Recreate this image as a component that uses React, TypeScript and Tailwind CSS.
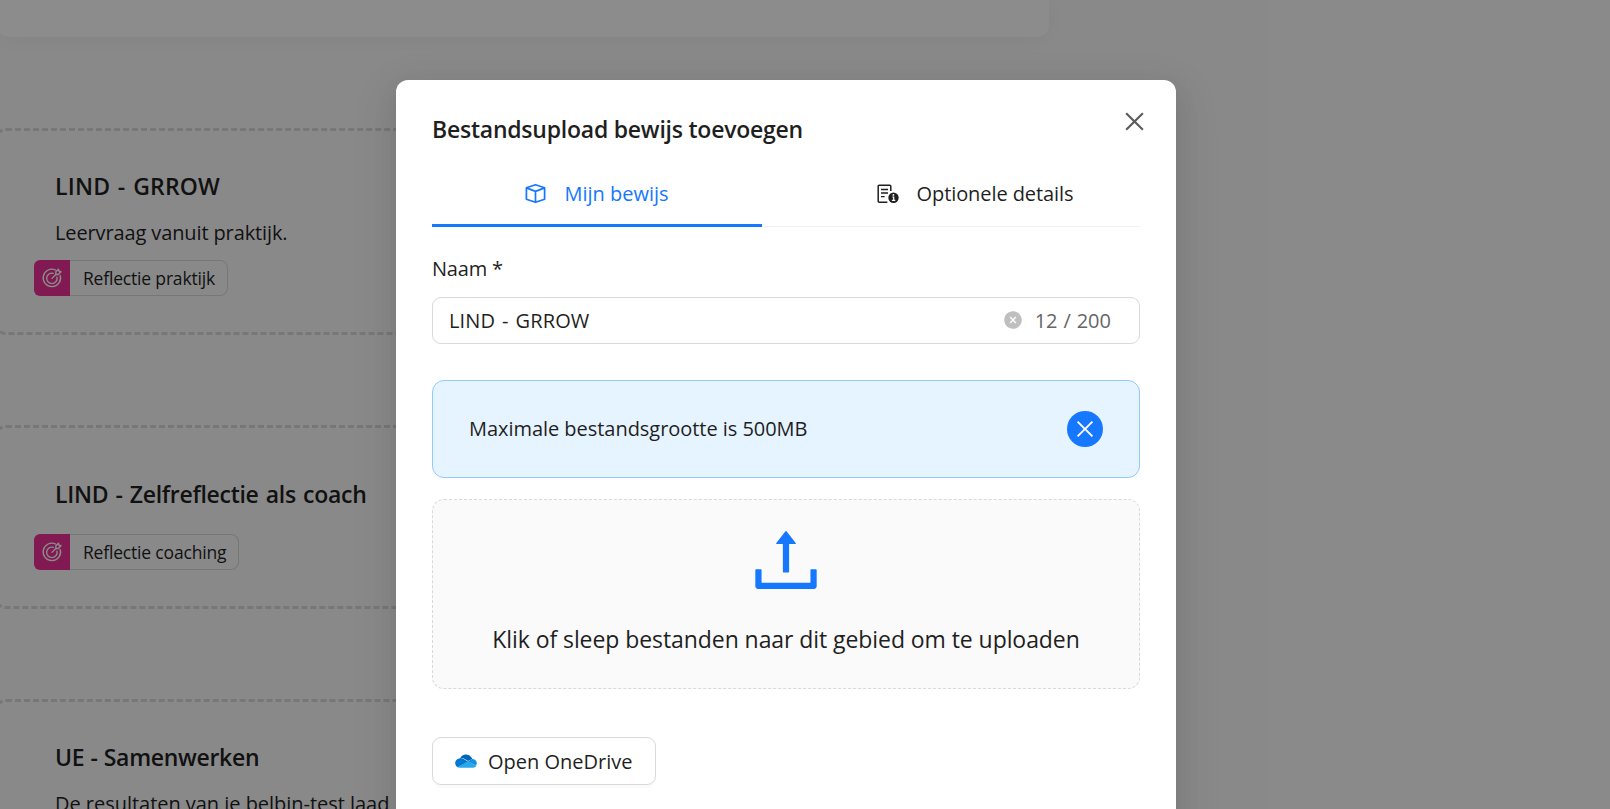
import type { ReactNode } from 'react';
import { AiOutlineClose, AiFillCloseCircle, AiOutlineUpload } from 'react-icons/ai';

function GoalIcon() {
  return (
    <svg
      viewBox="0 0 24 24"
      className="size-[22px]"
      fill="none"
      stroke="currentColor"
      strokeWidth="1.5"
      strokeLinecap="round"
      strokeLinejoin="round"
    >
      <path d="M15.6 3.200A9.500 9.500 0 1 0 21 9.400" />
      <path d="M13.400 6.900A5.700 5.700 0 1 0 17.400 11" />
      <path d="M12 12.400 16.400 8" />
      <path d="M16.200 8.200V5.200L19 2.400l.6 2.200 2.200.6L19 8.200z" />
    </svg>
  );
}

function CubeIcon() {
  return (
    <svg viewBox="0 0 21 21" className="size-[21px]" fill="none" stroke="currentColor" strokeWidth="1.7" strokeLinejoin="round">
      <path d="M10.5 1.700 19.600 4.700v11.600l-9.100 3-9.100-3V4.700z" />
      <path d="M1.400 4.900l9.100 3.500 9.100-3.500M10.500 8.400v10.900" />
    </svg>
  );
}

function DetailsIcon() {
  return (
    <svg viewBox="0 0 22 20" className="h-5 w-[22px]">
      <path
        d="M10.4 18.2H2.2a1 1 0 0 1-1-1V2.2a1 1 0 0 1 1-1h10.6a1 1 0 0 1 1 1V7"
        fill="none"
        stroke="currentColor"
        strokeWidth="1.5"
      />
      <path d="M4 5.5h7M4 9h7M4 12.6h3.6" stroke="currentColor" strokeWidth="1.4" fill="none" />
      <circle cx="16.5" cy="13.8" r="5.2" fill="currentColor" />
      <path d="M15.3 13h1.4v3.2M14.9 16.4h3.4" stroke="#fff" strokeWidth="1.2" fill="none" />
      <circle cx="16.4" cy="10.9" r=".9" fill="#fff" />
    </svg>
  );
}

function OneDriveIcon() {
  return (
    <svg viewBox="0 0 24 15" className="h-[14px] w-[22px]">
      <path d="M5.5 5A7 7 0 0 1 18 3.6L19 5.4l-4.700 2.200L9 4.600z" fill="#0364b8" />
      <path d="M5.5 4.6c1.300-.3 2.700 0 4 .7l5 3L3 14.300A5 5 0 0 1 .2 10C.1 7.200 2.500 4.700 5.500 4.600z" fill="#0078d4" />
      <path d="M14 8.2 16.900 6c1-.5 1.800-.8 2.600-.8 2.500.2 4.300 2.300 4.300 4.800l-.8 2.500z" fill="#1490df" />
      <path d="m14.3 7.9 9.100 4.800c-.8 1.400-2 2.100-3.700 2.100H5.200c-1 0-1.800-.2-2.700-.8z" fill="#28a8ea" />
    </svg>
  );
}

function EvidenceCard({ className, children }: { className: string; children: ReactNode }) {
  return (
    <section className={`-ml-[6px] w-[1054px] shrink-0 rounded-xl border-[3px] border-dashed border-[#d9d9d9] ${className}`}>
      {children}
    </section>
  );
}

function CardTitle({ className, children }: { className: string; children: ReactNode }) {
  return <h3 className={`ml-[58px] text-[23px] leading-9 font-semibold ${className}`}>{children}</h3>;
}

function Tag({ children }: { children: ReactNode }) {
  return (
    <div className="ml-[37px] flex h-9 w-fit">
      <div className="flex w-9 items-center justify-center rounded-l-md bg-[#eb2f96] text-white">
        <GoalIcon />
      </div>
      <div className="flex items-center rounded-r-lg border border-l-0 border-[#d9d9d9] px-3 pl-[13px] text-[17.5px] tracking-[-0.18px]">
        {children}
      </div>
    </div>
  );
}

function UploadModal() {
  return (
    <div className="relative h-[900px] w-[780px] rounded-xl bg-white px-9 pt-[29px] shadow-[0_9px_24px_0_rgba(0,0,0,0.08),0_4px_9px_-6px_rgba(0,0,0,0.12),0_13px_42px_12px_rgba(0,0,0,0.05)]">
      <h2 className="text-[23px] leading-10 font-semibold tracking-[-0.23px]">Bestandsupload bewijs toevoegen</h2>
      <button className="absolute top-[28px] right-[28px] text-[#5c5c5c]">
        <AiOutlineClose className="size-[27px]" />
      </button>

      <div className="mt-[14px] flex h-[64px] border-b border-[#f0f0f0]">
        <div className="-mb-px flex w-[330px] items-center justify-center gap-[18px] border-b-[3px] border-[#1677ff] text-[#1677ff]">
          <CubeIcon />
          <span className="text-[20px]">Mijn bewijs</span>
        </div>
        <div className="ml-12 flex flex-1 items-center justify-center gap-[18px] pb-[2px]">
          <DetailsIcon />
          <span className="text-[20px] tracking-[-0.08px]">Optionele details</span>
        </div>
      </div>

      <label className="mt-[25px] block text-[20px] leading-[33px] tracking-[-0.2px]">Naam *</label>
      <div className="mt-[12px] flex h-[47px] items-center rounded-[9px] border border-[#d9d9d9] pr-[28px] pl-[16px] text-[20px]">
        <span className="flex-1 pt-px tracking-[0.15px] [word-spacing:1.5px]">LIND - GRROW</span>
        <AiFillCloseCircle className="mb-[2px] size-5 text-[#bfbfbf]" />
        <span className="ml-[12px] pt-px text-[#666] [word-spacing:0.7px]">12 / 200</span>
      </div>

      <div className="mt-9 flex h-[98px] items-center justify-between rounded-xl border border-[#91caff] bg-[#e6f4ff] px-9 text-[20px] tracking-[-0.04px]">
        <span>Maximale bestandsgrootte is 500MB</span>
        <button className="flex size-9 items-center justify-center rounded-full bg-[#1677ff] text-white">
          <AiOutlineClose className="size-6" />
        </button>
      </div>

      <div className="mt-[21px] flex h-[190px] flex-col items-center rounded-xl border border-dashed border-[#d9d9d9] bg-[#fafafa] pt-[18px]">
        <AiOutlineUpload className="size-[84px] text-[#1677ff]" />
        <p className="mt-[19px] text-[23px] leading-9 tracking-[-0.07px]">Klik of sleep bestanden naar dit gebied om te uploaden</p>
      </div>

      <button className="mt-12 flex h-12 w-[224px] items-center rounded-[9px] border border-[#d9d9d9] pl-[22px] text-[20px] shadow-[0_3px_0_rgba(0,0,0,0.02)]">
        <OneDriveIcon />
        <span className="ml-[11px] pt-[2px]">Open OneDrive</span>
      </button>
    </div>
  );
}

export default function App() {
  return (
    <div className="relative h-[809px] w-full overflow-hidden bg-[#fafafa] font-['Open_Sans','Noto_Sans',sans-serif] whitespace-nowrap text-[#1f1f1f]">
      <main className="flex flex-col">
        <div className="-ml-[3px] h-[37px] w-[1052px] shrink-0 rounded-b-xl bg-white shadow-[0_2px_24px_rgba(0,0,0,0.05)]" />

        <EvidenceCard className="mt-[91px] h-[207px] pt-[37px]">
          <CardTitle className="tracking-[0.2px] [word-spacing:1.5px]">LIND - GRROW</CardTitle>
          <p className="mt-[12px] ml-[58px] text-[20px] leading-[33px] tracking-[-0.12px]">Leervraag vanuit praktijk.</p>
          <div className="mt-[11px]">
            <Tag>Reflectie praktijk</Tag>
          </div>
        </EvidenceCard>

        <EvidenceCard className="mt-[90px] h-[184px] pt-[48px]">
          <CardTitle className="tracking-[-0.3px] [word-spacing:1.6px]">LIND - Zelfreflectie als coach</CardTitle>
          <div className="mt-[22px]">
            <Tag>Reflectie coaching</Tag>
          </div>
        </EvidenceCard>

        <EvidenceCard className="mt-[90px] h-[200px] pt-[37px]">
          <CardTitle className="tracking-[-0.3px] [word-spacing:0.5px]">UE - Samenwerken</CardTitle>
          <p className="mt-[12px] ml-[58px] text-[20px] leading-[33px] tracking-[-0.03px]">De resultaten van je belbin-test laad</p>
        </EvidenceCard>
      </main>

      <div className="absolute inset-0 flex bg-black/45 pt-20 pl-[396px]">
        <UploadModal />
      </div>
    </div>
  );
}
